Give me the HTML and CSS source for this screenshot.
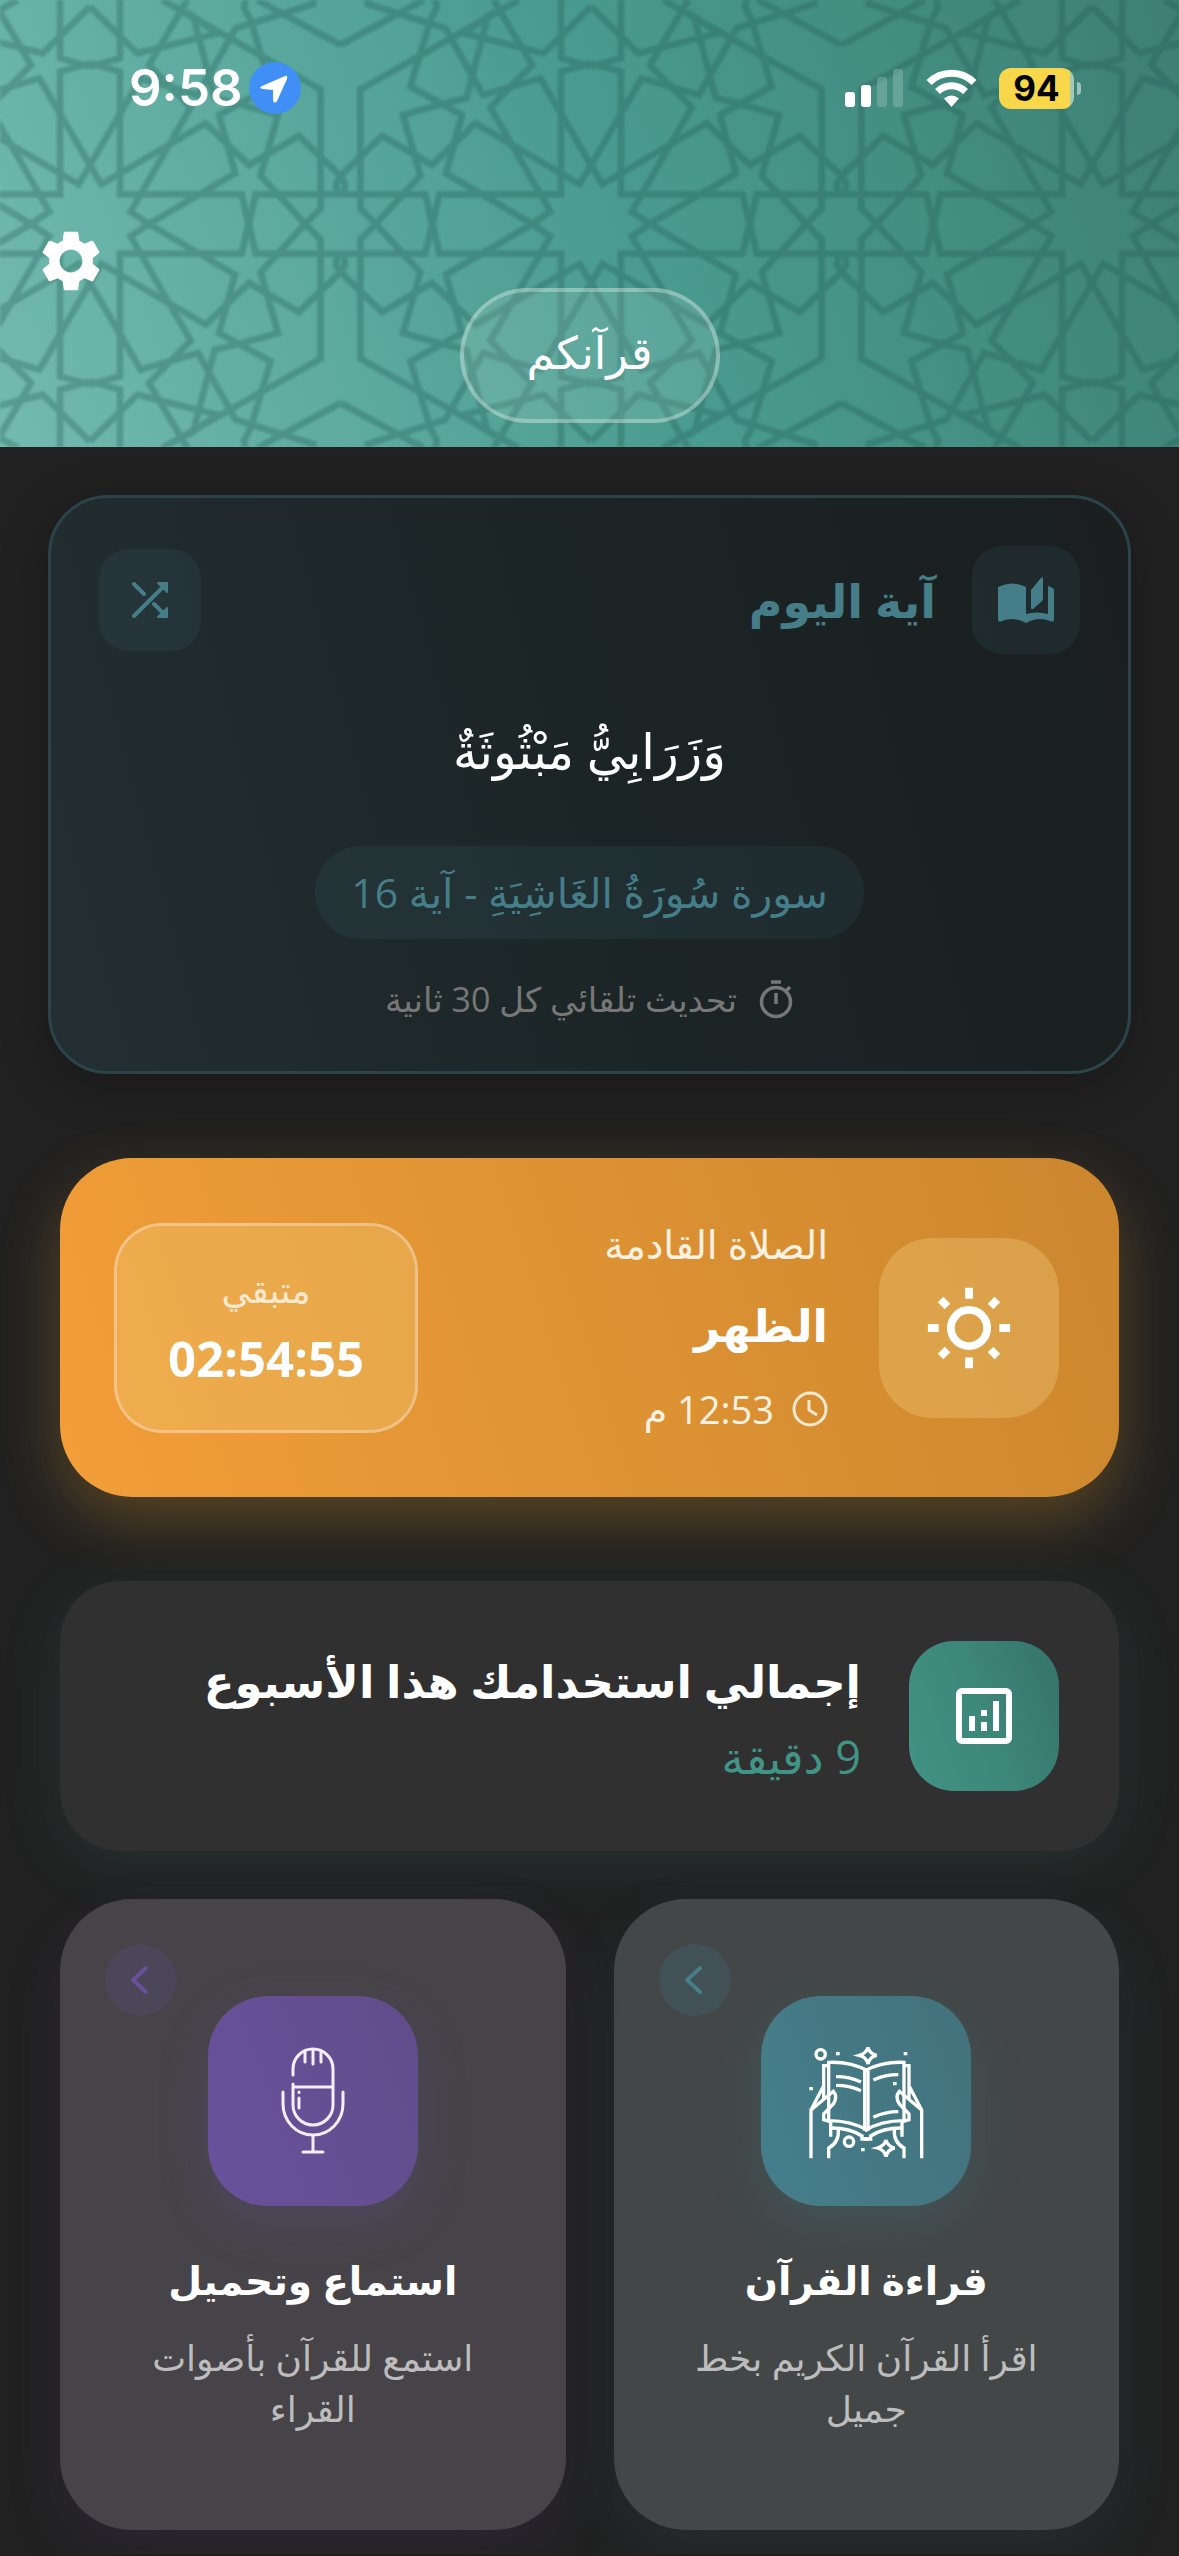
FILE: index.html
```html
<!DOCTYPE html>
<html lang="ar" dir="rtl">
<head>
    <meta charset="UTF-8">
    <meta name="viewport" content="width=device-width, initial-scale=1">
    <title>قرآنكم</title>
    <link rel="stylesheet" href="styles.css">
</head>
<body>

    <header class="header">
        <!-- Star pattern: one quarter is drawn, then mirrored to fill the tile -->
        <svg class="header-pattern" aria-hidden="true">
            <defs>
                <g id="quarter" transform="scale(0.3333) translate(-28 0)" fill="none" stroke="#1f5c55" stroke-width="20">
                    <path d="M28 20L170 160L410 100L338 50L402 295L475 312L592 345L540 527L674 672" />
                    <path d="M118 0V175L28 200M28 190L118 215V583H483L505 680" />
                    <path d="M320 0L205 195L330 322L150 635L205 672" />
                    <path d="M28 495L180 235L352 285L465 85L698 12V0" />
                    <path d="M245 0L720 268V625L674 672" />
                    <path d="M495 0L490 22L510 60L570 260L475 312L415 345L463 520L205 672" />
                    <path d="M530 0L780 135" />
                    <path d="M28 495L62 553L375 370L505 495L655 408L780 528" />
                    <path d="M503 680L525 583H770L766 550L780 528" />
                </g>
                <g id="half">
                    <use href="#quarter" />
                    <use href="#quarter" transform="translate(0 448) scale(1 -1)" />
                </g>
                <pattern id="stars" x="90" y="0" width="501" height="448" patternUnits="userSpaceOnUse">
                    <use href="#half" />
                    <use href="#half" transform="translate(501 0) scale(-1 1)" />
                </pattern>
            </defs>
            <rect width="100%" height="100%" fill="url(#stars)" opacity="0.32" />
        </svg>

        <div class="status-bar" dir="ltr">
            <div class="status-left">
                <span class="clock">9:58</span>
                <svg class="location" viewBox="0 0 52 52" aria-hidden="true">
                    <circle cx="26" cy="26" r="26" fill="#408ff7" />
                    <path d="M36 14Q39 13 38 17L28 39Q25 43 24 38V28L14 27Q9 26 13 24Z" fill="#fff" />
                </svg>
            </div>
            <div class="status-right">
                <svg class="signal" viewBox="0 0 59 38" fill="#fff" aria-hidden="true">
                    <rect x="0" y="23" width="10" height="15" rx="3" />
                    <rect x="16" y="16" width="10" height="22" rx="3" />
                    <rect x="32" y="8" width="10" height="30" rx="3" opacity="0.2" />
                    <rect x="48" y="0" width="10" height="38" rx="3" opacity="0.2" />
                </svg>
                <svg class="wifi" viewBox="0 0 51 38" aria-hidden="true">
                    <path d="M3 13.500A32 32 0 0 1 48 13.500M11.500 22.500A20 20 0 0 1 39.500 22.500" fill="none" stroke="#fff" stroke-width="7" />
                    <path d="M18 29.500Q25.500 23.500 33 29.500L25.500 38Z" fill="#fff" />
                </svg>
                <div class="battery"><span class="battery-level">94</span></div>
            </div>
        </div>

        <button class="settings" type="button" aria-label="الإعدادات">
            <svg viewBox="0 0 24 24" fill="#fff" aria-hidden="true">
                <path d="M19.430 12.980c.04-.32.07-.64.07-.98s-.03-.66-.07-.98l2.110-1.650c.19-.15.24-.42.12-.64l-2-3.460c-.12-.22-.39-.3-.61-.22l-2.490 1c-.52-.4-1.080-.73-1.690-.98l-.38-2.650C14.460 2.180 14.250 2 14 2h-4c-.25 0-.46.18-.49.42l-.38 2.650c-.61.25-1.170.59-1.690.98l-2.490-1c-.23-.09-.49 0-.61.22l-2 3.460c-.13.22-.07.49.12.64l2.110 1.650c-.04.32-.07.65-.07.98s.03.66.07.98l-2.110 1.650c-.19.15-.24.42-.12.64l2 3.460c.12.22.39.3.61.22l2.490-1c.52.4 1.080.73 1.690.98l.38 2.650c.03.24.24.42.49.42h4c.25 0 .46-.18.49-.42l.38-2.650c.61-.25 1.170-.59 1.690-.98l2.490 1c.23.09.49 0 .61-.22l2-3.460c.12-.22.07-.49-.12-.64l-2.110-1.650zM12 15.900c-2.150 0-3.900-1.750-3.900-3.900s1.750-3.900 3.900-3.900 3.900 1.750 3.900 3.900-1.750 3.900-3.900 3.900z" />
            </svg>
        </button>

        <h1 class="logo">قرآنكم</h1>
    </header>

    <main class="content">

        <!-- Verse of the day -->
        <section class="verse-card">
            <div class="verse-head">
                <div class="verse-icon">
                    <svg viewBox="0 0 56 46" fill="#457d89" aria-hidden="true">
                        <path d="M0 10Q14 3 28 10V37Q39 34 50 37V9Q56 11 56 13V43Q55 46 52 44Q40 39 28 46Q15 39 4 44Q1 46 0 43Z" />
                        <path d="M33 13L43 1Q45 -1 45 2V21Q45 23 44 24L35 32Q33 33 33 31Z" />
                    </svg>
                </div>
                <h2 class="verse-title">آية اليوم</h2>
                <button class="shuffle" type="button" aria-label="آية أخرى">
                    <svg viewBox="0 0 36 36" fill="#457d89" stroke="#457d89" aria-hidden="true">
                        <path d="M2 2L12 12M2 34L31 5M22 22L31 31" fill="none" stroke-width="4" stroke-linecap="round" />
                        <path d="M26 1H35V10ZM35 26V35H26Z" stroke-width="2" stroke-linejoin="round" />
                    </svg>
                </button>
            </div>
            <p class="verse-text">وَزَرَابِيُّ مَبْثُوثَةٌ</p>
            <p class="verse-ref">سورة سُورَةُ الغَاشِيَةِ - آية 16</p>
            <p class="verse-refresh">
                <svg viewBox="0 0 36 40" fill="none" stroke="#777" stroke-width="3.500" aria-hidden="true">
                    <circle cx="18" cy="23" r="14.500" />
                    <path d="M13 3H23M18 14V25M28 12L32 8" />
                </svg>
                <span>تحديث تلقائي كل 30 ثانية</span>
            </p>
        </section>

        <!-- Next prayer -->
        <section class="prayer-card">
            <div class="prayer-icon">
                <svg viewBox="0 0 96 96" fill="none" stroke="#fff" stroke-width="8" aria-hidden="true">
                    <circle cx="48" cy="48" r="18.500" />
                    <path d="M48 7V18M48 78V89M6 48H17M79 48H90M19 19L26 26M77 19L70 26M19 77L26 70M77 77L70 70" />
                </svg>
            </div>
            <div class="prayer-info">
                <p class="prayer-label">الصلاة القادمة</p>
                <h2 class="prayer-name">الظهر</h2>
                <p class="prayer-time">
                    <svg viewBox="0 0 36 36" fill="none" stroke="#fbe9d0" stroke-width="3" aria-hidden="true">
                        <circle cx="18" cy="18" r="16" />
                        <path d="M17 9V19L25 24" />
                    </svg>
                    <span>12:53 م</span>
                </p>
            </div>
            <div class="countdown">
                <span class="countdown-label">متبقي</span>
                <span class="countdown-value">02:54:55</span>
            </div>
        </section>

        <!-- Weekly usage -->
        <section class="usage-card">
            <div class="usage-icon">
                <svg viewBox="0 0 56 56" fill="#fff" aria-hidden="true">
                    <rect x="3" y="3" width="50" height="50" rx="3" fill="none" stroke="#fff" stroke-width="6" />
                    <path d="M13 28H19V43H13ZM25 22H31V28H25ZM25 34H31V43H25ZM37 13H43V43H37Z" />
                </svg>
            </div>
            <div class="usage-info">
                <h2 class="usage-title">إجمالي استخدامك هذا الأسبوع</h2>
                <p class="usage-value">9 دقيقة</p>
            </div>
        </section>

        <!-- Features -->
        <nav class="features">
            <a class="feature feature-read" href="#read">
                <span class="feature-arrow">
                    <svg viewBox="0 0 24 36" fill="none" stroke="currentColor" stroke-width="4" stroke-linecap="round" stroke-linejoin="round" aria-hidden="true">
                        <path d="M17 6L4 18L17 30" />
                    </svg>
                </span>
                <span class="feature-icon">
                    <svg class="icon-book" viewBox="87 70 345 345" fill="none" stroke="#fff" stroke-width="10" aria-hidden="true">
                        <g id="side">
                            <path d="M264 330V150Q210 122 146 125V300Q215 300 264 330" />
                            <path d="M146 135H131V235M93 268L131 195" />
                            <path d="M93 413V268L160 212Q174 228 160 250L131 280V297L152 303V348" />
                            <path d="M155 322Q210 322 246 346V355H264" />
                            <path d="M175 325Q178 365 146 382V413" />
                        </g>
                        <use href="#side" transform="translate(518 0) scale(-1 1)" />
                        <path d="M168 168Q208 168 243 184M168 194Q208 194 243 210M280 178Q315 162 355 162M280 290Q315 273 355 273" />
                        <path d="M264 80Q268 98 290 104Q268 109 264 130Q259 109 238 104Q259 98 264 80ZM318 358Q322 376 344 382Q322 387 318 408Q313 387 292 382Q313 376 318 358Z" />
                        <circle cx="122" cy="101" r="14" />
                        <circle cx="207" cy="363" r="14" />
                        <path d="M168 99H179M371 99H382M88 204H99M339 189H350M243 387H254" />
                    </svg>
                </span>
                <span class="feature-title">قراءة القرآن</span>
                <span class="feature-text">اقرأ القرآن الكريم بخط<br>جميل</span>
            </a>
            <a class="feature feature-listen" href="#listen">
                <span class="feature-arrow">
                    <svg viewBox="0 0 24 36" fill="none" stroke="currentColor" stroke-width="4" stroke-linecap="round" stroke-linejoin="round" aria-hidden="true">
                        <path d="M17 6L4 18L17 30" />
                    </svg>
                </span>
                <span class="feature-icon">
                    <svg class="icon-mic" viewBox="0 0 64 108" fill="none" stroke="#f3eefb" stroke-width="3" stroke-linecap="round" aria-hidden="true">
                        <path d="M12 28V22A20 20 0 0 1 52 22V58A20 20 0 0 1 12 58V37M12 40H52" />
                        <path d="M24 4V15M32 3V17M40 4V15M18 45V45.500M18 51V61" />
                        <path d="M2 45V57A30 31 0 0 0 62 57V45M32 88V105M22 105H42" />
                    </svg>
                </span>
                <span class="feature-title">استماع وتحميل</span>
                <span class="feature-text">استمع للقرآن بأصوات<br>القراء</span>
            </a>
        </nav>

    </main>

</body>
</html>
```
FILE: styles.css
```css
* {
    box-sizing: border-box;
}

body {
    margin: 0;
    background-color: #212121;
    color: #fff;
    font-family: "Open Sans", "DejaVu Sans", sans-serif;
    font-size: 36px;
}

h1, h2, p {
    margin: 0;
}

svg {
    display: block;
}

button {
    border: none;
    padding: 0;
    background: none;
    cursor: pointer;
}

/* Header */
.header {
    position: relative;
    padding: 60px 36px 24px;
    background: linear-gradient(69deg, #73bab0, #4a9c90 52%, #3d7f73);
    display: flex;
    flex-direction: column;
    align-items: center;
    overflow: hidden;
}

.header-pattern {
    position: absolute;
    inset: 0;
    width: 100%;
    height: 100%;
    filter: blur(1px);
}

.status-bar {
    position: relative;
    align-self: stretch;
    display: flex;
    justify-content: space-between;
    align-items: center;
    height: 56px;
    padding: 0 62px 0 93px;
    font-family: Inter, sans-serif;
}

.status-left, .status-right {
    display: flex;
    align-items: center;
}

.status-left {
    gap: 6px;
}

.status-right {
    gap: 22px;
}

.clock {
    font-size: 51px;
    font-weight: 600;
    line-height: 56px;
}

.location {
    width: 52px;
    height: 52px;
}

.signal {
    width: 59px;
    height: 38px;
}

.wifi {
    width: 51px;
    height: 38px;
}

.battery {
    display: flex;
    align-items: center;
    gap: 3px;
}

.battery::after {
    content: "";
    width: 4px;
    height: 13px;
    border-radius: 0 6px 6px 0;
    background-color: rgba(255, 255, 255, 0.5);
}

.battery-level {
    width: 75px;
    height: 41px;
    border-radius: 12px;
    background: linear-gradient(90deg, #f8d74a 95%, #a6c9b8 95%);
    color: #000;
    font-size: 35px;
    font-weight: 700;
    line-height: 41px;
    text-align: center;
}

.settings {
    position: relative;
    align-self: flex-end;
    width: 70px;
    height: 70px;
    margin-top: 110px;
}

.logo {
    position: relative;
    width: 260px;
    height: 135px;
    margin-top: -8px;
    border: 4px solid rgba(255, 255, 255, 0.3);
    border-radius: 68px;
    background-color: rgba(255, 255, 255, 0.1);
    font-size: 45px;
    font-weight: 400;
    line-height: 120px;
    text-align: center;
}

/* Verse of the day */
.content {
    padding: 48px 60px 24px;
}

.verse-card {
    display: flex;
    flex-direction: column;
    align-items: center;
    margin: 0 -12px 84px;
    padding: 48px;
    border: 3px solid #2b4349;
    border-radius: 60px;
    background: linear-gradient(75deg, #232f32, #1c2526 50%, #1a1e1e);
    box-shadow: 0 12px 48px rgba(0, 0, 0, 0.25);
}

.verse-head {
    align-self: stretch;
    display: flex;
    align-items: center;
    gap: 36px;
}

.verse-icon, .shuffle {
    display: flex;
    align-items: center;
    justify-content: center;
    border-radius: 30px;
    background-color: rgba(69, 125, 137, 0.12);
}

.verse-icon {
    width: 108px;
    height: 108px;
}

.verse-icon svg {
    width: 56px;
    height: 46px;
}

.verse-title {
    flex: 1;
    color: #457d89;
    font-size: 46px;
    line-height: 60px;
}

.shuffle {
    width: 102px;
    height: 102px;
}

.shuffle svg {
    width: 36px;
    height: 36px;
}

.verse-text {
    margin: 36px 0;
    font-size: 49px;
    line-height: 120px;
}

.verse-ref {
    padding: 18px 36px;
    border-radius: 46px;
    background-color: rgba(69, 125, 137, 0.12);
    color: #457d89;
    font-size: 41px;
    line-height: 57px;
}

.verse-refresh {
    display: flex;
    align-items: center;
    gap: 21px;
    margin-top: 36px;
    color: #777;
    font-size: 34px;
    line-height: 48px;
}

.verse-refresh svg {
    width: 36px;
    height: 40px;
}

/* Next prayer */
.prayer-card {
    display: flex;
    align-items: center;
    gap: 51px;
    height: 339px;
    margin-bottom: 84px;
    padding: 0 60px 0 54px;
    border-radius: 72px;
    background: linear-gradient(72deg, #f39e39, #de9333 50%, #cb862e);
    box-shadow: 0 24px 60px rgba(255, 175, 40, 0.25);
}

.prayer-icon {
    display: flex;
    align-items: center;
    justify-content: center;
    width: 180px;
    height: 180px;
    border-radius: 54px;
    background-color: rgba(245, 220, 140, 0.3);
}

.prayer-icon svg {
    width: 94px;
    height: 94px;
}

.prayer-info {
    flex: 1;
}

.prayer-label {
    color: #fdf1e2;
    font-size: 39px;
    line-height: 60px;
}

.prayer-name {
    font-size: 45px;
    line-height: 102px;
}

.prayer-time {
    display: flex;
    align-items: center;
    gap: 18px;
    color: #fdf1e2;
    font-size: 38px;
    line-height: 66px;
}

.prayer-time svg {
    width: 36px;
    height: 36px;
}

.countdown {
    display: flex;
    flex-direction: column;
    justify-content: center;
    width: 304px;
    height: 210px;
    border: 3px solid rgba(255, 255, 255, 0.4);
    border-radius: 48px;
    background-color: rgba(240, 220, 140, 0.25);
    background-clip: padding-box;
    text-align: center;
}

.countdown-label {
    color: #fbe9d0;
    font-size: 36px;
    line-height: 60px;
}

.countdown-value {
    font-size: 49px;
    font-weight: 700;
    line-height: 76px;
}

/* Weekly usage */
.usage-card {
    display: flex;
    align-items: center;
    gap: 48px;
    height: 270px;
    margin-bottom: 48px;
    padding: 0 60px;
    border-radius: 60px;
    background-color: #303030;
    box-shadow: 0 12px 60px rgba(65, 148, 134, 0.15);
}

.usage-icon {
    display: flex;
    align-items: center;
    justify-content: center;
    width: 150px;
    height: 150px;
    border-radius: 45px;
    background: linear-gradient(70deg, #419486, #3d8779 50%, #35736a);
}

.usage-icon svg {
    width: 56px;
    height: 56px;
}

.usage-title {
    font-size: 45px;
    line-height: 81px;
}

.usage-value {
    color: #419486;
    font-size: 45px;
    line-height: 72px;
}

/* Features */
.features {
    display: grid;
    grid-template-columns: 1fr 1fr;
    gap: 48px;
}

.feature {
    position: relative;
    display: flex;
    flex-direction: column;
    align-items: center;
    padding: 97px 36px 96px;
    border-radius: 72px;
    color: #fff;
    text-align: center;
    text-decoration: none;
}

.feature-read {
    background-color: #434747;
    box-shadow: 0 24px 60px rgba(69, 125, 137, 0.12);
}

.feature-listen {
    background-color: #464448;
    box-shadow: 0 24px 60px rgba(104, 80, 154, 0.12);
}

.feature-arrow {
    position: absolute;
    top: 45px;
    left: 45px;
    display: flex;
    align-items: center;
    justify-content: center;
    width: 72px;
    height: 72px;
    border-radius: 50%;
}

.feature-arrow svg {
    width: 24px;
    height: 36px;
}

.feature-read .feature-arrow {
    background-color: #425155;
    color: #457d89;
}

.feature-listen .feature-arrow {
    background-color: #4b4658;
    color: #68509a;
}

.feature-icon {
    display: flex;
    align-items: center;
    justify-content: center;
    width: 210px;
    height: 210px;
    margin-bottom: 36px;
    border-radius: 60px;
}

.feature-read .feature-icon {
    background: linear-gradient(70deg, #457f8b, #43727c);
    box-shadow: 0 18px 48px rgba(69, 125, 137, 0.25);
}

.feature-listen .feature-icon {
    background: linear-gradient(70deg, #6a519c, #614d8a);
    box-shadow: 0 18px 48px rgba(104, 80, 154, 0.25);
}

.icon-book {
    width: 115px;
    height: 115px;
}

.icon-mic {
    width: 64px;
    height: 108px;
}

.feature-title {
    margin-bottom: 15px;
    font-size: 39px;
    font-weight: 700;
    line-height: 75px;
}

.feature-text {
    color: #bdbdbd;
    font-size: 36px;
    line-height: 51px;
}
```
